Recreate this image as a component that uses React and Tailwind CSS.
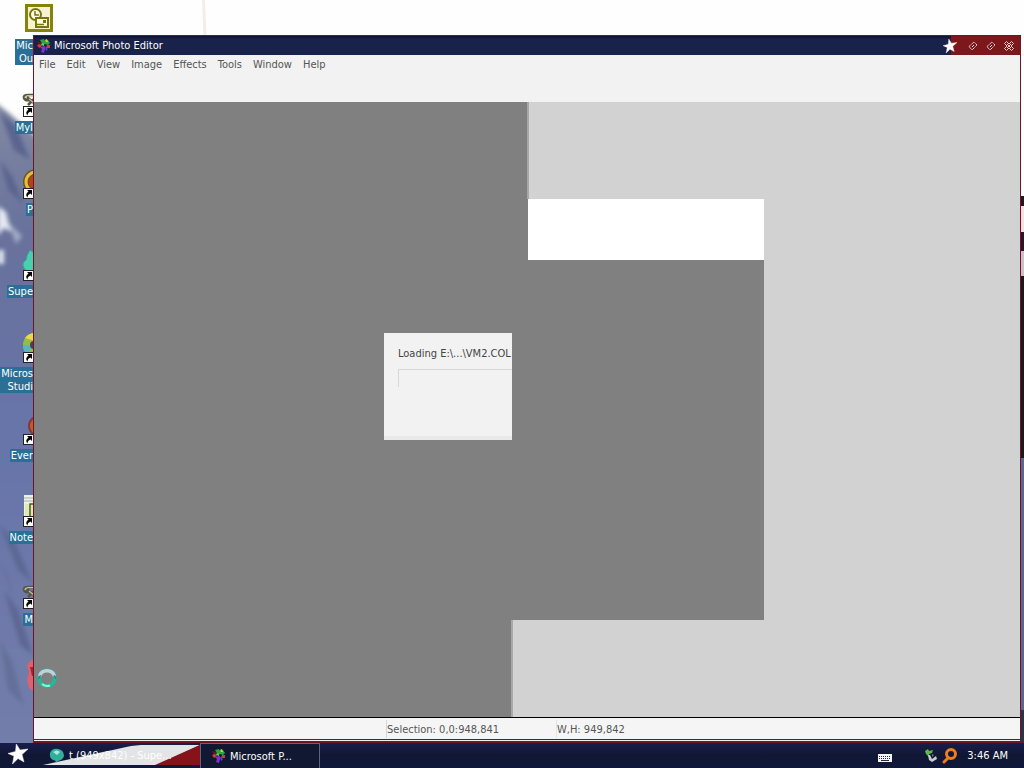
import React from "react";

const menus = ["File", "Edit", "View", "Image", "Effects", "Tools", "Window", "Help"];

const STAR = "M8.3 0 L12 6 L20 5 L14 10.5 L16 18 L10 14.5 L4.5 20 L6 12 L0 9.5 L7.5 7.5 Z";

function Star({ className }) {
  return (
    <svg viewBox="0 0 20 20" className={className} aria-hidden="true">
      <path d={STAR} fill="#fff" stroke="#fff" strokeWidth="0.500" />
    </svg>
  );
}

function PhotoLogo({ className }) {
  return (
    <svg viewBox="0 0 16 16" className={className} aria-hidden="true">
      <path d="M1 3 L5 4 L6 7 L3 8 Z" fill="#6c1224" />
      <path d="M1 7 L4 6 L6 8 L3 10 Z" fill="#d83a3a" />
      <path d="M4 2 L8 1 L9 3 L12 2 L14 5 L12 7 L9 6 L7 7 Z" fill="#26a83c" />
      <path d="M9 2 L11 1 L12 4 L10 4 Z" fill="#c8d83c" />
      <path d="M6 5 L8 6 L8 8 L5 7 Z" fill="#55d860" />
      <path d="M11 7 L14 7 L14 10 L10 10 Z" fill="#d03850" />
      <path d="M4 9 L9 8 L9 11 L8 15 L5 14 L6 11 Z" fill="#8a2bd8" />
      <path d="M9 9 L12 11 L10 13 Z" fill="#4b49e8" />
    </svg>
  );
}

function Art({ kind }) {
  if (kind === "outlook")
    return (
      <g>
        <rect x="3" y="2" width="28" height="28" fill="#85830c" />
        <rect x="6" y="5" width="22" height="22" fill="#f4f2d0" />
        <circle cx="13.500" cy="12.500" r="5.500" fill="#fffde8" stroke="#77750c" strokeWidth="2" />
        <path d="M13 9 v4 h4" fill="none" stroke="#77750c" strokeWidth="1.500" />
        <rect x="14" y="16" width="12" height="9" fill="#fffde8" stroke="#77750c" strokeWidth="2" />
        <path d="M15 22.500 h7" stroke="#77750c" strokeWidth="1.500" />
        <rect x="21" y="18" width="3" height="3" fill="#77750c" />
      </g>
    );
  if (kind === "knot")
    return (
      <g fill="none">
        <path d="M13 11 H6 Q1 11 2 14 Q3 17 8 16 M5 13 L13 20 M13 14 L6 21" stroke="#5a563f" strokeWidth="2.500" />
        <path d="M12 11.500 H6 Q3 12 3 14 M7 15 L12 19" stroke="#c9c3a4" strokeWidth="1.200" />
      </g>
    );
  if (kind === "shell")
    return (
      <g>
        <circle cx="14" cy="16" r="13" fill="#6d5520" />
        <circle cx="14" cy="16" r="10" fill="none" stroke="#e7bd3c" strokeWidth="3" />
        <circle cx="14" cy="16" r="7" fill="#c03d12" />
      </g>
    );
  if (kind === "drop")
    return <path d="M8 2 Q4 8 4 12 Q0 14 1 18 Q4 26 12 24 V5 Z" fill="#4ccfae" stroke="#379d98" />;
  if (kind === "disc")
    return (
      <g>
        <circle cx="13" cy="15" r="12" fill="#94bd45" />
        <path d="M3 8 A12 12 0 0 1 13 3 V11 Z" fill="#ecd94a" />
        <path d="M1 15 A12 12 0 0 0 5 24 L11 16 Z" fill="#55b6c2" />
        <circle cx="12" cy="15" r="4" fill="#513b62" />
      </g>
    );
  if (kind === "orb")
    return <circle cx="17" cy="14" r="10" fill="#c85a24" stroke="#823a3e" strokeWidth="2" />;
  if (kind === "note")
    return (
      <g>
        <rect x="2" y="1" width="24" height="28" fill="#eef2e2" />
        <path d="M2 4 h12 M2 7 h12" stroke="#9fb5b8" />
        <rect x="3" y="10" width="10" height="15" fill="#e0eab0" />
        <path d="M8 22 V10 H14" fill="none" stroke="#4b5a2e" strokeWidth="1.500" />
      </g>
    );
  return (
    <g>
      <path d="M14 1 Q6 2 5 8 L7 14 Q3 24 8 31 L14 34 Z" fill="#d8646f" />
      <path d="M8 9 h6 v9 h-4 Z" fill="#b3202c" />
    </g>
  );
}

const shortcuts = [
  { kind: "outlook", lines: ["Mic", "Ou"] },
  { kind: "knot", lines: ["MyI"], link: true },
  { kind: "shell", lines: ["P"], link: true },
  { kind: "drop", lines: ["Supe"], link: true },
  { kind: "disc", lines: ["Micros", "Studi"], link: true },
  { kind: "orb", lines: ["Ever"], link: true },
  { kind: "note", lines: ["Note"], link: true },
  { kind: "knot", lines: ["M"], link: true },
  { kind: "badge", lines: [] },
];

function Shortcut({ kind, lines, link }) {
  return (
    <button type="button" aria-label={lines.length ? undefined : "Shortcut"} className="flex h-[82px] w-[76px] shrink-0 flex-col items-start pt-[2px]">
      <svg viewBox="0 0 32 32" className="ml-[22px] size-8 overflow-visible" aria-hidden="true">
        <Art kind={kind} />
        {link && (
          <g>
            <rect x="1.500" y="22.500" width="10" height="10" fill="#fff" stroke="#222" />
            <path d="M5 24 h5 v5 l-1.500 -1.500 q-3 1 -3 4 q-3 -3 1 -6 z" fill="#000" />
          </g>
        )}
      </svg>
      <span className="mt-[5px] flex w-[33px] flex-col text-right">
        <span className="ml-auto flex flex-col bg-[#2a6f95] pl-px">
          {lines.map((l) => (
            <span key={l} className="leading-[13px] text-white">{l}</span>
          ))}
        </span>
      </span>
    </button>
  );
}

function Wallpaper() {
  return (
    <svg viewBox="0 0 1024 743" preserveAspectRatio="none" className="absolute inset-0 size-full" aria-hidden="true">
      <defs>
        <linearGradient id="hill" x1="0" y1="0" x2="0" y2="1">
          <stop offset="0" stopColor="#848ba4" />
          <stop offset="0.200" stopColor="#68729c" />
          <stop offset="0.500" stopColor="#6774a9" />
          <stop offset="1" stopColor="#747eaa" />
        </linearGradient>
        <filter id="soft"><feGaussianBlur stdDeviation="2" /></filter>
      </defs>
      <rect width="1024" height="743" fill="#fefefe" />
      <path d="M203 -10 L205 36" stroke="#f1eeec" strokeWidth="3" />
      <path d="M-10 98 L10 114 L40 140 V760 H-10 Z" fill="url(#hill)" filter="url(#soft)" />
      <g filter="url(#soft)">
        <path d="M0 112 L16 126 L30 160 L14 150 Z M0 160 L12 176 L24 205 L8 190 Z" fill="#5a658e" />
        <path d="M-2 206 L6 212 L11 232 L4 228 L-2 236 Z M-2 250 h6 v14 h-6z" fill="#e4e8f2" />
        <path d="M8 222 L22 236 L16 244 Z" fill="#a2abc8" />
        <path d="M0 525 L14 540 L32 582 L18 570 Z M4 590 L18 610 L33 655 L20 645 Z" fill="#5b6793" />
        <path d="M0 640 L12 662 L24 706 L8 690 Z M0 560 L8 575 L14 600 Z" fill="#646f99" />
      </g>
      <rect x="1020" y="196" width="4" height="10" fill="#251722" />
      <rect x="1020" y="206" width="4" height="26" fill="#f4dfe5" />
      <rect x="1020" y="232" width="4" height="19" fill="#2c1525" />
      <rect x="1020" y="251" width="4" height="25" fill="#cbbfc8" />
      <rect x="1020" y="276" width="4" height="182" fill="#19181c" />
      <rect x="1020" y="458" width="4" height="252" fill="#5c6690" />
      <rect x="1020" y="710" width="4" height="33" fill="#2b3448" />
    </svg>
  );
}

function Diamond() {
  return (
    <svg viewBox="0 0 10 10" className="size-[10px]" aria-hidden="true">
      <path d="M1 5.500 L6 1 L9 4 L4 9 Z" fill="none" stroke="#f1dede" strokeDasharray="1.400 0.500" />
      <path d="M4 6 L6 4" stroke="#f1dede" />
    </svg>
  );
}

function TitleBar() {
  return (
    <header className="flex h-[19px] shrink-0 items-center bg-linear-to-b from-[#0f1736] from-5% to-[#18224a] to-15% text-white">
      <PhotoLogo className="ml-[2px] size-4" />
      <h1 className="ml-[2px] flex-1">Microsoft Photo Editor</h1>
      <div className="flex h-full items-center gap-2 bg-[#7c171c] pr-[6px]">
        <Star className="-ml-[8px] size-[14px]" />
        <button type="button" aria-label="Minimize" className="ml-[3px]"><Diamond /></button>
        <button type="button" aria-label="Maximize"><Diamond /></button>
        <button type="button" aria-label="Close">
          <svg viewBox="0 0 10 10" className="size-[10px]" aria-hidden="true">
            <path d="M2.500 0.500 L5 3 L7.500 0.500 L9.500 2.500 L7 5 L9.500 7.500 L7.500 9.500 L5 7 L2.500 9.500 L0.500 7.500 L3 5 L0.500 2.500 Z M3 3 L7 7 M7 3 L3 7" fill="none" stroke="#f1dede" strokeWidth="0.900" />
          </svg>
        </button>
      </div>
    </header>
  );
}

function Workspace() {
  return (
    <main className="relative flex flex-1 flex-col bg-[#d2d2d2]">
      <div className="h-[97px] w-[495px] border-r-2 border-[#a8a8a8] bg-[#808080]" />
      <div className="flex h-[61px]">
        <div className="w-[494px] bg-[#808080]" />
        <div className="w-[236px] bg-white" />
      </div>
      <div className="h-[360px] w-[730px] bg-[#808080]" />
      <div className="w-[479px] flex-1 border-r-2 border-[#a8a8a8] bg-[#808080]" />
      <section aria-label="Loading" className="absolute top-[231px] left-[350px] h-[107px] w-[128px] overflow-hidden border-b-4 border-[#e9e9e9] bg-[#f2f2f2] pt-3 pl-[14px] text-[#444]">
        <p className="leading-[18px] whitespace-nowrap">Loading E:\...\VM2.COL</p>
        <div className="mt-[6px] h-[18px] border-t border-l border-[#d8d8d8]" />
      </section>
      <svg viewBox="0 0 20 20" className="absolute bottom-[29px] left-[3px] size-5" aria-hidden="true">
        <circle cx="10" cy="10" r="8" fill="none" stroke="#22b89c" strokeWidth="3.500" />
        <path d="M2.500 8 A8 8 0 0 1 17.500 8" fill="none" stroke="#c3d0d8" strokeWidth="3.500" />
        <path d="M5 16 A8 8 0 0 0 13 17.500" fill="none" stroke="#7dffd6" strokeWidth="2" />
        <path d="M1.500 11 l2 -4 M17 7 l2 4" stroke="#287784" />
      </svg>
    </main>
  );
}

function PhotoWindow() {
  return (
    <div className="absolute top-[35px] right-[3px] bottom-0 left-[33px] flex flex-col border border-b-2 border-[#6d1426] bg-[#f2f2f2]">
      <TitleBar />
      <nav className="flex h-[47px] shrink-0 items-start gap-[11px] pl-[5px] text-[#555]">
        {menus.map((m) => (
          <button type="button" key={m} className="leading-5">{m}</button>
        ))}
      </nav>
      <Workspace />
      <footer className="mb-px flex h-[23px] shrink-0 items-center border-t border-b border-t-black border-b-[#6d1426] bg-[#f5f5f5] pl-[352px] leading-4 text-[#555]">
        <span className="w-[170px] border-l border-[#d8d8d8] pt-[2px]">Selection: 0,0:948,841</span>
        <span className="border-l border-[#e4e4e4] pt-[2px]">W,H: 949,842</span>
      </footer>
    </div>
  );
}

function Taskbar() {
  return (
    <footer className="flex h-[25px] shrink-0 items-stretch bg-linear-to-b from-[#191d4c] via-[#101733] to-[#10183a] text-white">
      <button type="button" aria-label="Start" className="w-[43px] pb-1 pl-2"><Star className="size-5" /></button>
      <button type="button" className="relative flex w-[157px] items-center overflow-hidden">
        <svg viewBox="0 0 157 25" preserveAspectRatio="none" className="absolute inset-0 size-full" aria-hidden="true">
          <path d="M0 22 Q55 10 88 3 L98 2 H157 L114 22 Z" fill="#e2e4e6" />
          <path d="M157 2 V22 H112 Z" fill="#86121a" />
        </svg>
        <svg viewBox="0 0 16 16" className="relative ml-[6px] size-4" aria-hidden="true">
          <path d="M1 5 Q3 0 9 1 Q15 2 15 8 Q14 12 9 13 L7 15 Q7 12 4 12 Q0 10 1 5 Z" fill="#35ad9d" />
          <path d="M4 4 Q8 1 11 4 L8 7 Z" fill="#a5ecdc" />
        </svg>
        <span className="relative ml-1">t (949x842) - Supe...</span>
      </button>
      <button type="button" className="flex w-[120px] items-center border-t border-r border-l border-[#59647f] bg-[#111831]">
        <PhotoLogo className="ml-[10px] size-4" />
        <span className="ml-[3px]">Microsoft P...</span>
      </button>
      <div className="ml-auto flex items-center pr-4">
        <svg viewBox="0 0 14 8" className="mt-1 h-2 w-[14px]" aria-hidden="true">
          <rect width="14" height="8" fill="#f4f4f4" />
          <path d="M1 2.500 h12 M1 4.500 h12" stroke="#222b4c" strokeDasharray="1 1" />
          <path d="M3 6.500 h8" stroke="#222b4c" />
        </svg>
        <svg viewBox="0 0 16 16" className="ml-8 size-4" aria-hidden="true">
          <path d="M1 3 L4 1 L5 3 L9 2 L8 5 L5 6 L5 9 L2 6 Z" fill="#5dbb45" />
          <path d="M4 7 L6 7 L8 11 L12 8 L13 11 L8 14 L5 12 Z" fill="#c5ced0" />
          <path d="M8 6 L10 7 L8 9 Z" fill="#6b7984" />
        </svg>
        <svg viewBox="0 0 16 16" className="ml-[2px] size-4" aria-hidden="true">
          <path d="M6 10 L2 14" stroke="#ef791d" strokeWidth="3" strokeLinecap="round" />
          <circle cx="9" cy="6" r="4.500" fill="none" stroke="#f17c1d" strokeWidth="3" />
        </svg>
        <time className="ml-[9px]">3:46 AM</time>
      </div>
    </footer>
  );
}

export default function App() {
  return (
    <div className="flex min-h-screen flex-col overflow-hidden bg-white font-['DejaVu_Sans_Condensed','DejaVu_Sans',sans-serif] text-[11px] leading-[13px]">
      <div className="relative flex-1 overflow-hidden">
        <Wallpaper />
        <div className="relative flex flex-col">
          {shortcuts.map((s, i) => (
            <Shortcut key={i} {...s} />
          ))}
        </div>
        <PhotoWindow />
      </div>
      <Taskbar />
    </div>
  );
}
